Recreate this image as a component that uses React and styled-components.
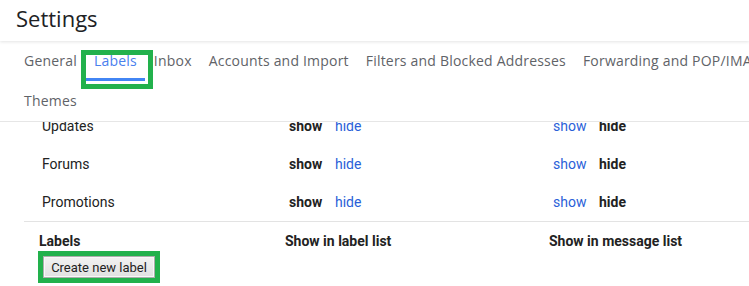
import { useLayoutEffect, useRef } from "react"
import styled, { createGlobalStyle } from "styled-components"

const GlobalStyle = createGlobalStyle`
  html, body {
    margin: 0;
    padding: 0;
    background: #fff;
    overflow: hidden;
  }
  body {
    font-family: Roboto, "Liberation Sans", Arial, sans-serif;
    color: #222;
  }
`

const Page = styled.div`
  width: 749px;
  height: 286px;
  display: flex;
  flex-direction: column;
  overflow: hidden;
`

const Header = styled.div`
  height: 41px;
  box-sizing: border-box;
  flex-shrink: 0;
  display: flex;
  align-items: center;
  padding: 0 0 5px 16px;
  position: relative;
  z-index: 2;
  box-shadow: 0 1px 3px rgba(60, 64, 67, 0.14);
`

const Title = styled.h1`
  margin: 0;
  font-family: "Open Sans", sans-serif;
  font-size: 22px;
  font-weight: 400;
  color: #202124;
  line-height: 28px;
`

const TabBar = styled.div`
  flex-shrink: 0;
  border-bottom: 1px solid #e6e6e6;
  padding-left: 16px;
`

const TabRow = styled.div`
  display: flex;
  gap: 1px;
  height: 40px;
  white-space: nowrap;
`

const Tab = styled.div`
  position: relative;
  display: flex;
  align-items: center;
  padding: 0 8px 1px;
  font-family: "Open Sans", sans-serif;
  font-size: 14px;
  letter-spacing: 0.2px;
  color: ${p => (p.$active ? "#4a80ee" : "#5f6368")};

  ${p => p.$active && `
    &::before {
      content: "";
      position: absolute;
      left: 0;
      right: 0;
      bottom: 0;
      height: 3px;
      background: #4285f4;
    }
  `}

  ${p => p.$marked && `
    &::after {
      content: "";
      position: absolute;
      left: -5px;
      top: 9px;
      width: 72px;
      height: 39px;
      box-sizing: border-box;
      border: 5px solid #22b14c;
    }
  `}
`

const Scroller = styled.div`
  flex: 1;
  overflow: hidden;
  padding-left: 24px;
`

const Row = styled.div`
  display: grid;
  grid-template-columns: ${p => p.$first}px 264px 1fr;
  align-items: center;
  height: 38px;
  padding-left: 18px;
  font-size: 14px;
`

const Section = styled.div`
  border-top: 1px solid #e3e3e3;
`

const HeadRow = styled.div`
  display: grid;
  grid-template-columns: 246px 264px 1fr;
  padding: 11px 0 0 15px;
  font-size: 14px;
  font-weight: 700;
  line-height: 17px;
`

const Choices = styled.div`
  display: flex;
`

const Choice = styled.span`
  min-width: 46px;
  font-weight: ${p => (p.$bold ? 700 : 400)};
  color: ${p => (p.$bold ? "#222" : "#2a5fd8")};
`

const Highlight = styled.div`
  display: inline-block;
  margin: 1px 0 0 14px;
  border: 5px solid #22b14c;
  line-height: 0;
`

const Button = styled.button`
  width: 112px;
  height: 22px;
  padding: 0;
  margin: 0;
  font-family: Roboto, "Liberation Sans", sans-serif;
  font-size: 13px;
  color: #222;
  border: 1px solid #adadad;
  background: linear-gradient(#f2f2f2, #e1e1e1);
  box-shadow: inset 0 0 0 1px #f8f8f8;
  cursor: pointer;
`

const Spacer = styled.div`
  height: 200px;
`

const tabs = [
  ["General", "Labels", "Inbox", "Accounts and Import", "Filters and Blocked Addresses", "Forwarding and POP/IMAP", "Add-ons", "Chat and Meet", "Advanced"],
  ["Themes"],
]

const categories = ["Primary", "Social", "Updates", "Forums", "Promotions"]

const Pair = ({ bold }) => (
  <Choices>
    <Choice $bold={bold === "show"}>show</Choice>
    <Choice $bold={bold === "hide"}>hide</Choice>
  </Choices>
)

export default function App() {
  const scroller = useRef(null)

  useLayoutEffect(() => {
    if (scroller.current) scroller.current.scrollTop = 91
  }, [])

  return (
    <Page>
      <GlobalStyle />
      <Header>
        <Title>Settings</Title>
      </Header>
      <TabBar>
        {tabs.map((row, i) => (
          <TabRow key={i}>
            {row.map(name => (
              <Tab key={name} $active={name === "Labels"} $marked={name === "Labels"}>
                {name}
              </Tab>
            ))}
          </TabRow>
        ))}
      </TabBar>
      <Scroller ref={scroller}>
        {categories.map(name => (
          <Row key={name} $first={247}>
            <span>{name}</span>
            <Pair bold="show" />
            <Pair bold="hide" />
          </Row>
        ))}
        <Section>
          <HeadRow>
            <span>Labels</span>
            <span>Show in label list</span>
            <span>Show in message list</span>
          </HeadRow>
          <Highlight>
            <Button>Create new label</Button>
          </Highlight>
          <Spacer />
        </Section>
      </Scroller>
    </Page>
  )
}
